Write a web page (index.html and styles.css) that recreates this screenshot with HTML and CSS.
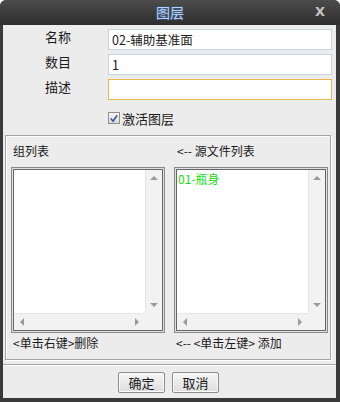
FILE: index.html
```html
<!DOCTYPE html>
<html lang="zh-CN">
  <head>
    <meta charset="UTF-8" />
    <title>图层</title>
    <link rel="stylesheet" href="styles.css">
  </head>
  <body>
    <div class="dialog">
      <div class="titlebar">
        <span class="title">图层</span>
        <span class="close">X</span>
      </div>
      <div class="content">
        <div class="fields">
          <span class="field-label">名称</span>
          <div class="input">02-辅助基准面</div>
          <span class="field-label">数目</span>
          <div class="input">1</div>
          <span class="field-label">描述</span>
          <div class="input focused"></div>
          <span></span>
          <label class="check">
            <span class="checkbox">
              <svg width="11" height="11" viewBox="0 0 11 11">
                <path d="M2 5.5 L4.5 8.5 L9 2" fill="none" stroke="#3a5a9a" stroke-width="1.8" />
              </svg>
            </span>
            激活图层
          </label>
        </div>

        <div class="group">
          <div class="col">
            <div class="col-title">组列表</div>
            <div class="listbox">
              <div class="items"></div>
              <div class="vscroll">
                <span class="arrow up"></span>
                <span class="arrow down"></span>
              </div>
              <div class="hscroll">
                <span class="arrow left"></span>
                <span class="arrow right"></span>
              </div>
              <div class="corner"></div>
            </div>
            <div class="hint">&lt;单击右键&gt;删除</div>
          </div>
          <div class="col">
            <div class="col-title">&lt;-- 源文件列表</div>
            <div class="listbox">
              <div class="items">
                <div class="item">01-瓶身</div>
              </div>
              <div class="vscroll">
                <span class="arrow up"></span>
                <span class="arrow down"></span>
              </div>
              <div class="hscroll">
                <span class="arrow left"></span>
                <span class="arrow right"></span>
              </div>
              <div class="corner"></div>
            </div>
            <div class="hint">&lt;-- &lt;单击左键&gt; 添加</div>
          </div>
        </div>

        <div class="separator"></div>

        <div class="footer">
          <button class="btn">确定</button>
          <button class="btn">取消</button>
        </div>
      </div>
    </div>
  </body>
</html>
```

FILE: styles.css
```css
body {
  margin: 0;
  background: #ffffff;
  font-family: "Noto Sans CJK SC", "Noto Sans", sans-serif;
  font-size: 12px;
  color: #1a1a1a;
}

.dialog {
  width: 340px;
  height: 402px;
  box-sizing: border-box;
  background: #3a3a3a;
  border-radius: 6px 6px 0 0;
  padding: 0 4px 4px 3px;
  display: flex;
  flex-direction: column;
  overflow: hidden;
}

.titlebar {
  height: 25px;
  flex: none;
  display: flex;
  align-items: center;
  justify-content: center;
  position: relative;
  background: linear-gradient(#4c4c4c, #2e2e2e);
  border-radius: 6px 6px 0 0;
  margin: 0 -4px 0 -3px;
}

.title {
  color: #b4d2fa;
  font-size: 14px;
  line-height: 25px;
  text-shadow: 0 0 2px #4a7ac0;
}

.close {
  position: absolute;
  right: 15px;
  top: 4px;
  color: #c4c4c4;
  font-family: "DejaVu Sans", sans-serif;
  font-weight: bold;
  font-size: 13px;
}

.content {
  flex: 1;
  min-height: 0;
  background: #ececec;
  display: flex;
  flex-direction: column;
}

.fields {
  display: grid;
  grid-template-columns: 105px 1fr;
  grid-auto-rows: 21px;
  row-gap: 4px;
  padding: 4px 4px 0 0;
}

.field-label {
  padding-left: 42px;
  font-size: 13px;
  line-height: 16px;
}

.input {
  box-sizing: border-box;
  border: 1px solid #c6d6df;
  background: #ffffff;
  padding-left: 3px;
  font-size: 12.5px;
  line-height: 19px;
}

.input.focused {
  border-color: #e9b949;
}

.check {
  display: flex;
  align-items: center;
  gap: 2px;
  margin-top: 6px;
  height: 16px;
  font-size: 13px;
}

.checkbox {
  width: 12px;
  height: 12px;
  box-sizing: border-box;
  border: 1px solid #8e8f8f;
  background: linear-gradient(#f4f4f4, #dcdcdc);
  display: flex;
  align-items: center;
  justify-content: center;
}

.group {
  margin: 10px 5px 0 2px;
  border: 1px solid #a6a6a6;
  box-shadow: inset 1px 1px 0 #ffffff, 1px 1px 0 #ffffff;
  padding: 8px 2px 9px 5px;
  display: flex;
  gap: 9px;
}

.col {
  width: 154px;
  display: flex;
  flex-direction: column;
}

.col-title {
  height: 14px;
  line-height: 14px;
  padding-left: 2px;
  margin-bottom: 9px;
}

.col + .col .col-title {
  padding-left: 3px;
}

.listbox {
  height: 166px;
  box-sizing: border-box;
  border: 1px solid #8a8a8a;
  box-shadow: inset 0 0 0 1px #e0e0e0, inset 0 0 0 2px #666666;
  padding: 2px;
  background: #ffffff;
  display: grid;
  grid-template-columns: 1fr 17px;
  grid-template-rows: 1fr 17px;
}

.items {
  padding: 1px 0 0 1px;
}

.item {
  color: #12e012;
  font-size: 12px;
  line-height: 16px;
}

.vscroll,
.hscroll,
.corner {
  background: #f2f2f2;
}

.vscroll {
  display: flex;
  flex-direction: column;
  justify-content: space-between;
  align-items: center;
  padding: 6px 0;
  border-left: 1px solid #e6e6e6;
}

.hscroll {
  display: flex;
  justify-content: space-between;
  align-items: center;
  padding: 0 6px;
  border-top: 1px solid #e6e6e6;
}

.arrow {
  width: 0;
  height: 0;
  border: 4px solid transparent;
}

.arrow.up {
  border-bottom-color: #9a9a9a;
  border-top-width: 0;
}

.arrow.down {
  border-top-color: #9a9a9a;
  border-bottom-width: 0;
}

.arrow.left {
  border-right-color: #9a9a9a;
  border-left-width: 0;
}

.arrow.right {
  border-left-color: #9a9a9a;
  border-right-width: 0;
}

.hint {
  margin-top: 3px;
  height: 14px;
  line-height: 14px;
  padding-left: 2px;
}

.separator {
  margin: 4px 0 0 0;
  height: 1px;
  flex: none;
  background: #a6a6a6;
  border-bottom: 1px solid #ffffff;
}

.footer {
  display: flex;
  justify-content: center;
  gap: 7px;
  margin-top: 6px;
  padding-right: 2px;
}

.btn {
  width: 47px;
  height: 21px;
  padding: 0;
  border: 1px solid #8d8d8d;
  border-radius: 2px;
  background: linear-gradient(#f6f6f6, #dedede);
  box-shadow: inset 0 0 0 1px #fbfbfb;
  font-family: "Noto Sans CJK SC", sans-serif;
  font-size: 13px;
  color: #1a1a1a;
}
```
